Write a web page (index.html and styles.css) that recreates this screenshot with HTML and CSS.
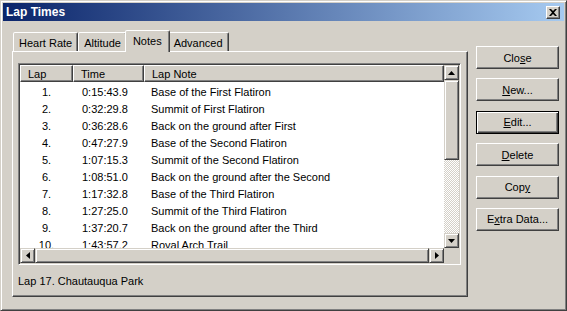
FILE: index.html
```html
<!DOCTYPE html>
<html lang="en">
  <head>
    <title>Lap Times</title>
    <link rel="stylesheet" href="styles.css">
  </head>

  <body>
    <div class="window">
      <div class="titlebar">
        <span class="title">Lap Times</span>
        <button type="button" class="title-close" aria-label="Close">
          <svg width="8" height="7" viewBox="0 0 8 7">
            <path d="M0 0h2l2 2 2-2h2l-3 3.5 3 3.5h-2l-2-2-2 2h-2l3-3.5z" fill="#000" />
          </svg>
        </button>
      </div>

      <div class="main">
        <div class="sheet">
          <div class="tabs">
            <div class="tab">Heart Rate</div>
            <div class="tab">Altitude</div>
            <div class="tab tab-active">Notes</div>
            <div class="tab">Advanced</div>
          </div>

          <div class="panel">
            <div class="listbox">
              <div class="list">
                <div class="list-head">
                  <div class="head-cell">Lap</div>
                  <div class="head-cell">Time</div>
                  <div class="head-cell">Lap Note</div>
                </div>
                <div class="list-rows">
                  <div class="row"><span class="c-lap">1.</span><span class="c-time">0:15:43.9</span><span class="c-note">Base of the First Flatiron</span></div>
                  <div class="row"><span class="c-lap">2.</span><span class="c-time">0:32:29.8</span><span class="c-note">Summit of First Flatiron</span></div>
                  <div class="row"><span class="c-lap">3.</span><span class="c-time">0:36:28.6</span><span class="c-note">Back on the ground after First</span></div>
                  <div class="row"><span class="c-lap">4.</span><span class="c-time">0:47:27.9</span><span class="c-note">Base of the Second Flatiron</span></div>
                  <div class="row"><span class="c-lap">5.</span><span class="c-time">1:07:15.3</span><span class="c-note">Summit of the Second Flatiron</span></div>
                  <div class="row"><span class="c-lap">6.</span><span class="c-time">1:08:51.0</span><span class="c-note">Back on the ground after the Second</span></div>
                  <div class="row"><span class="c-lap">7.</span><span class="c-time">1:17:32.8</span><span class="c-note">Base of the Third Flatiron</span></div>
                  <div class="row"><span class="c-lap">8.</span><span class="c-time">1:27:25.0</span><span class="c-note">Summit of the Third Flatiron</span></div>
                  <div class="row"><span class="c-lap">9.</span><span class="c-time">1:37:20.7</span><span class="c-note">Back on the ground after the Third</span></div>
                  <div class="row"><span class="c-lap">10.</span><span class="c-time">1:43:57.2</span><span class="c-note">Royal Arch Trail</span></div>
                </div>
              </div>

              <!-- vertical scrollbar -->
              <div class="vscroll">
                <div class="sb-btn">
                  <svg width="7" height="4" viewBox="0 0 7 4"><path d="M3.5 0 7 4H0z" /></svg>
                </div>
                <div class="sb-thumb sb-thumb-v"></div>
                <div class="sb-track"></div>
                <div class="sb-btn">
                  <svg width="7" height="4" viewBox="0 0 7 4"><path d="M0 0h7L3.5 4z" /></svg>
                </div>
              </div>

              <!-- horizontal scrollbar -->
              <div class="hscroll">
                <div class="sb-btn">
                  <svg width="4" height="7" viewBox="0 0 4 7"><path d="M4 0v7L0 3.5z" /></svg>
                </div>
                <div class="sb-thumb sb-thumb-h"></div>
                <div class="sb-btn">
                  <svg width="4" height="7" viewBox="0 0 4 7"><path d="M0 0l4 3.5L0 7z" /></svg>
                </div>
              </div>

              <div class="corner"></div>
            </div>

            <p class="status">Lap 17. Chautauqua Park</p>
          </div>
        </div>

        <div class="actions">
          <button type="button" class="btn">Clo<u>s</u>e</button>
          <button type="button" class="btn"><u>N</u>ew...</button>
          <button type="button" class="btn btn-default"><u>E</u>dit...</button>
          <button type="button" class="btn"><u>D</u>elete</button>
          <button type="button" class="btn">Cop<u>y</u></button>
          <button type="button" class="btn">E<u>x</u>tra Data...</button>
        </div>
      </div>
    </div>
  </body>
</html>
```

FILE: styles.css
```css
* {
  box-sizing: border-box;
}

body {
  margin: 0;
  background-color: #d4d0c8;
  color: #000;
  font: 11px "Liberation Sans", Arial, sans-serif;
}

button {
  font: inherit;
  color: inherit;
  margin: 0;
  padding: 0;
}

.window {
  inline-size: 567px;
  block-size: 311px;
  padding: 2px;
  border: 1px solid;
  border-color: #d4d0c8 #404040 #404040 #d4d0c8;
  box-shadow: inset 1px 1px #fff, inset -1px -1px #808080;
  background-color: #d4d0c8;
}

.titlebar {
  display: flex;
  align-items: center;
  justify-content: space-between;
  block-size: 18px;
  padding: 0 4px 0 3px;
  background: linear-gradient(to right, #0a246a, #a6caf0);
}

.title {
  color: #fff;
  font-weight: bold;
  font-size: 12px;
}

.title-close {
  display: grid;
  place-items: center;
  inline-size: 14px;
  block-size: 13px;
  border: 1px solid;
  border-color: #fff #404040 #404040 #fff;
  box-shadow: inset -1px -1px #808080;
  background-color: #d4d0c8;
}

.main {
  display: flex;
  gap: 8px;
  padding: 9px 0 0 9px;
}

.sheet {
  inline-size: 456px;
}

/* tabs */
.tabs {
  display: flex;
  align-items: flex-end;
  block-size: 21px;
  padding-inline-start: 1px;
}

.tab {
  display: flex;
  align-items: center;
  block-size: 19px;
  padding: 1px 5px 0 5px;
  border: 1px solid;
  border-bottom: 0;
  border-color: #fff #404040 transparent #fff;
  border-radius: 2px 2px 0 0;
  box-shadow: inset -1px 0 #808080;
  background-color: #d4d0c8;
  white-space: nowrap;
}

.tab-active {
  position: relative;
  z-index: 1;
  block-size: 22px;
  margin: 0 -2px -1px;
  padding: 0 7px 2px;
}

.panel {
  block-size: 246px;
  padding: 11px 0 0 5px;
  border: 1px solid;
  border-color: #fff #404040 #404040 #fff;
  box-shadow: inset -1px -1px #808080;
}

/* list view */
.listbox {
  display: grid;
  grid-template-columns: 1fr 15px;
  grid-template-rows: 1fr 15px;
  inline-size: 443px;
  block-size: 202px;
  border: 1px solid;
  border-color: #808080 #fff #fff #808080;
  box-shadow: inset 1px 1px #404040, inset -1px -1px #d4d0c8;
  padding: 1px;
  background-color: #fff;
}

.list {
  overflow: hidden;
}

.list-head,
.row {
  display: grid;
  grid-template-columns: 53px 71px 1fr;
}

.head-cell {
  block-size: 17px;
  padding: 1px 0 0 7px;
  line-height: 14px;
  border: 1px solid;
  border-color: #fff #404040 #404040 #fff;
  box-shadow: inset -1px -1px #808080;
  background-color: #d4d0c8;
}

.list-rows {
  padding-top: 2px;
}

.row {
  block-size: 17px;
  line-height: 17px;
  white-space: nowrap;
}

.c-lap {
  text-align: center;
}

.c-time {
  padding-inline-start: 9px;
}

.c-note {
  padding-inline-start: 7px;
}

/* scrollbars */
.vscroll {
  display: flex;
  flex-direction: column;
}

.hscroll {
  display: flex;
}

.sb-btn {
  display: grid;
  place-items: center;
  flex: none;
  inline-size: 15px;
  block-size: 15px;
  border: 1px solid;
  border-color: #d4d0c8 #404040 #404040 #d4d0c8;
  box-shadow: inset 1px 1px #fff, inset -1px -1px #808080;
  background-color: #d4d0c8;
}

.sb-thumb {
  border: 1px solid;
  border-color: #d4d0c8 #404040 #404040 #d4d0c8;
  box-shadow: inset 1px 1px #fff, inset -1px -1px #808080;
  background-color: #d4d0c8;
}

.sb-thumb-v {
  block-size: 80px;
}

.sb-thumb-h {
  flex: 1;
}

.sb-track {
  flex: 1;
  background: repeating-conic-gradient(#d4d0c8 0 25%, #fff 0 50%) 0 0 / 2px 2px;
}

.corner {
  background-color: #d4d0c8;
}

.status {
  margin: 9px 0 0;
  line-height: 14px;
}

/* buttons */
.actions {
  display: flex;
  flex-direction: column;
  gap: 9.4px;
  padding-top: 16px;
}

.btn {
  inline-size: 83px;
  block-size: 23px;
  border: 1px solid;
  border-color: #fff #404040 #404040 #fff;
  box-shadow: inset -1px -1px #808080;
  background-color: #d4d0c8;
  text-align: center;

  u {
    text-underline-offset: 1px;
  }
}

.btn-default {
  border-color: #000;
  box-shadow: inset 1px 1px #fff, inset -1px -1px #404040, inset -2px -2px #808080;
}
```
